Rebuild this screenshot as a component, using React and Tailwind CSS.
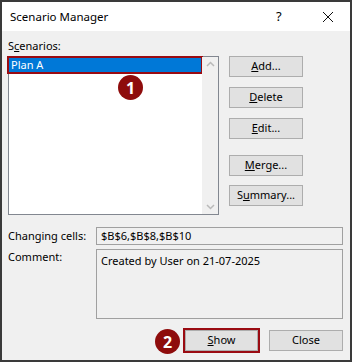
import React from 'react';

const font = { fontFamily: '"Segoe UI", "Noto Sans", Arial, sans-serif' };

const Btn = ({ children, className = '' }) => (
  <div className={`h-[21px] flex items-center justify-center bg-[#e1e1e1] border border-[#adadad] text-[11px] text-black ${className}`}>
    {children}
  </div>
);

const Badge = ({ n, className = '' }) => (
  <div className={`absolute w-[25px] h-[25px] rounded-full bg-[#8e0c0c] text-white text-[16px] font-bold flex items-center justify-center ${className}`}>
    {n}
  </div>
);

export default function App() {
  return (
    <div className="w-[352px] h-[362px] border-2 border-[#3a3a3a] bg-[#f0f0f0] flex flex-col relative" style={font}>
      {/* title bar */}
      <div className="h-[29px] bg-white flex items-center pl-[8px] text-[11.5px] text-black">
        <span className="flex-1">Scenario Manager</span>
        <span className="w-[10px] mr-[36px] text-[13px]">?</span>
        <svg width="12" height="12" viewBox="0 0 12 12" className="mr-[16px]">
          <path d="M1 1 L11 11 M11 1 L1 11" stroke="#111" strokeWidth="1" />
        </svg>
      </div>

      <div className="flex-1 flex flex-col pl-[6px] pr-[7px] text-[11px] text-black">
        <div className="mt-[7px] h-[16px] leading-[16px]">S<u>c</u>enarios:</div>
        <div className="flex mt-[2px]">
          {/* list box */}
          <div className="w-[211px] h-[159px] border border-[#828790] bg-white flex">
            <div className="flex-1 pt-[1px]">
              <div className="h-[14px] bg-[#0078d7] text-white leading-[14px] pl-[2px] outline-2 outline-[#9a0b12] mr-[1px]">
                Plan A
              </div>
            </div>
            <div className="w-[16px] bg-[#f0f0f0] flex flex-col justify-between items-center py-[4px]">
              <svg width="9" height="6" viewBox="0 0 9 6"><path d="M1 5 L4.5 1.5 L8 5" stroke="#b9b9b9" strokeWidth="1.5" fill="none" /></svg>
              <svg width="9" height="6" viewBox="0 0 9 6"><path d="M1 1 L4.5 4.5 L8 1" stroke="#b9b9b9" strokeWidth="1.5" fill="none" /></svg>
            </div>
          </div>
          {/* side buttons */}
          <div className="ml-[10px] w-[74px] flex flex-col">
            <Btn><u>A</u>dd...</Btn>
            <Btn className="mt-[10px]"><u>D</u>elete</Btn>
            <Btn className="mt-[10px]"><u>E</u>dit...</Btn>
            <Btn className="mt-[16px]"><u>M</u>erge...</Btn>
            <Btn className="mt-[9px]">S<u>u</u>mmary...</Btn>
          </div>
        </div>

        <div className="flex mt-[12px] items-center">
          <div className="w-[88px]">Changing cells:</div>
          <div className="flex-1 h-[18px] border border-[#a0a0a0] pl-[4px] leading-[16px]">$B$6,$B$8,$B$10</div>
        </div>
        <div className="flex mt-[4px]">
          <div className="w-[88px] leading-[16px]">Comment:</div>
          <div className="flex-1 h-[70px] border border-[#a0a0a0] pl-[4px] pt-[3px] leading-[16px]">Created by User on 21-07-2025</div>
        </div>

        <div className="flex justify-end mt-[11px]">
          <div className="w-[73px] h-[21px] outline-2 outline-[#9a0b12] flex">
            <Btn className="flex-1 border-[#0078d7]"><u>S</u>how</Btn>
          </div>
          <Btn className="w-[74px] ml-[11px]">Close</Btn>
        </div>
      </div>

      <Badge n="1" className="left-[116px] top-[73px]" />
      <Badge n="2" className="left-[153px] top-[327px]" />
    </div>
  );
}
